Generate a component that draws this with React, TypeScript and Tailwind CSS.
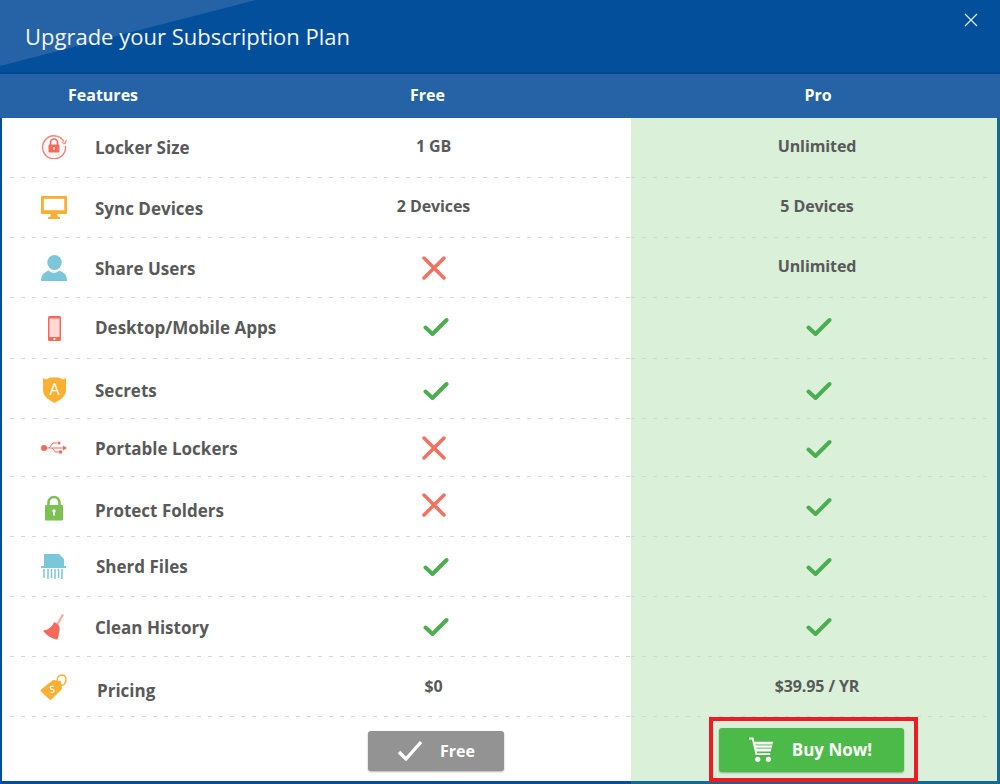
import React from "react";

const C = "#f8695a", O = "#fbb034", T = "#7cc6d9";

const LockerIcon = () => (
  <svg width="26" height="26" viewBox="0 0 26 26" fill="none">
    <path d="M23 8.500A11.500 11.500 0 1 0 24.500 13" stroke={C} strokeWidth="1.400" opacity=".85" />
    <path d="M20.500 9.500l3.500 1 1.500-3.500" stroke={C} strokeWidth="1.200" opacity=".8" />
    <circle cx="13" cy="13" r="9.500" stroke={C} strokeWidth=".8" strokeDasharray="1.500 1.500" opacity=".35" />
    <path d="M9.500 12V9.500a3.500 3.500 0 0 1 7 0V12" stroke={C} strokeWidth="1.700" />
    <rect x="7.500" y="11.500" width="11" height="8" rx="1" fill={C} />
    <rect x="12.300" y="14" width="1.400" height="3" fill="#fff" />
  </svg>
);
const MonitorIcon = () => (
  <svg width="26" height="23" viewBox="0 0 26 23">
    <path d="M1 0h24a1 1 0 0 1 1 1v16a1 1 0 0 1-1 1h-9l1 3h2v2H7v-2h2l1-3H1a1 1 0 0 1-1-1V1a1 1 0 0 1 1-1z" fill={O} />
    <rect x="2.800" y="2.800" width="20.400" height="11.400" fill="#fff" />
  </svg>
);
const UserIcon = () => (
  <svg width="26" height="26" viewBox="0 0 26 26">
    <ellipse cx="13.500" cy="7.500" rx="7.200" ry="7.500" fill={T} />
    <path d="M0 26c0-6 3-9 8-10.500 3 2.500 7 2.500 10 0C23 17 26 20 26 26z" fill={T} />
    <path d="M8 15.500c3 2.500 7 2.500 10 0" stroke="#fff" strokeWidth=".8" fill="none" />
  </svg>
);
const PhoneIcon = () => (
  <svg width="13" height="25" viewBox="0 0 13 25">
    <rect x="0" y="0" width="13" height="25" rx="1.500" fill={C} />
    <rect x="1.500" y="2.500" width="10" height="18.500" fill="#ffd9d4" />
    <circle cx="6.500" cy="23" r="1" fill="#fff" />
  </svg>
);
const ShieldIcon = () => (
  <svg width="23" height="26" viewBox="0 0 23 26">
    <path d="M0 1l3 1.500L7 0.500h9l4 2L23 1v12c0 6-5.500 10-11.500 13C5.500 23 0 19 0 13z" fill={O} />
    <text x="11.500" y="18" textAnchor="middle" fontSize="16" fill="#fff" fontFamily="'Open Sans', sans-serif">A</text>
  </svg>
);
const UsbIcon = () => (
  <svg width="26" height="14" viewBox="0 0 26 14" fill="none">
    <circle cx="3" cy="7" r="3" fill={C} />
    <path d="M3 7h22M8 7l4-5h4M11 7l3.500 4H18" stroke={C} strokeWidth="1" />
    <path d="M22 4.500L26 7l-4 2.500z" fill={C} />
    <circle cx="18" cy="2" r="1.500" fill={C} />
    <rect x="18" y="9.500" width="3" height="3" fill={C} />
  </svg>
);
const GreenLock = () => (
  <svg width="18" height="26" viewBox="0 0 18 26" fill="none">
    <path d="M3.500 11V7.500a5.500 5.500 0 0 1 11 0V11" stroke="#7cc152" strokeWidth="2.600" />
    <rect x="0" y="10" width="18" height="15.500" rx="1" fill="#7cc152" />
    <rect x="8" y="15.500" width="2" height="5" fill="#fff" />
    <circle cx="9" cy="16" r="1.700" fill="#fff" />
  </svg>
);
const ShredIcon = () => (
  <svg width="26" height="26" viewBox="0 0 26 26" fill="none">
    <path d="M3 0h15l5 5v8H3z" fill={T} />
    <rect x="0" y="12" width="25" height="2" fill={T} />
    <path d="M3 15v9M7 15v10M10.500 15v9M14 15v10M17.500 15v9M21 15v10" stroke={T} strokeWidth="1.500" />
  </svg>
);
const BroomIcon = () => (
  <svg width="24" height="27" viewBox="0 0 24 27" fill="none">
    <path d="M15 12L21 1.500" stroke={C} strokeWidth="2.400" opacity=".55" />
    <path d="M12 9c3 1 5 3 5.500 5 .5 3 -.5 7-2 12.500C11 26 5 23 1 17.500c4 0 9-3 11-8.500z" fill={C} />
  </svg>
);
const TagIcon = () => (
  <svg width="28" height="26" viewBox="0 0 28 26" fill="none">
    <path d="M13 6l8 1 1 8-10.500 10.500a1.500 1.500 0 0 1-2 0L1 17.500a1.500 1.500 0 0 1 0-2z" fill={O} />
    <path d="M18 9c-2-4 0-8 4-8s5 5 3 8c-1 2-3 2.500-4 2" stroke={O} strokeWidth="1.400" />
    <path d="M13.500 12.500c-2-1-4 .5-3 2 .8 1.300 3 .5 3.500 2 .4 1.500-2 2.800-3.500 1.500" stroke="#fff" strokeWidth="1.200" />
  </svg>
);

const Check = () => (
  <svg className="ml-[4px]" width="26" height="20" viewBox="0 0 26 20" fill="none">
    <path d="M2.500 10.500l7 6.500L23.500 3" stroke="#4cae50" strokeWidth="4" strokeLinecap="round" strokeLinejoin="round" />
  </svg>
);
const Cross = () => (
  <svg width="24" height="24" viewBox="0 0 24 24" fill="none">
    <path d="M2 2l20 20M22 2L2 22" stroke="#f4705f" strokeWidth="3.500" strokeLinecap="round" />
  </svg>
);
const Cart = () => (
  <svg width="24" height="26" viewBox="0 0 26 28" fill="none">
    <path d="M0 1.500h4l4 17h15" stroke="#fff" strokeWidth="2" />
    <path d="M5.500 5H26l-2.500 10.500H8z" fill="#fff" />
    <path d="M7 8.500h18M8 12h16" stroke="#4cba48" strokeWidth="1" />
    <circle cx="9.500" cy="24" r="2.800" fill="#fff" />
    <circle cx="21" cy="24" r="2.800" fill="#fff" />
  </svg>
);

const Dash = ({ className }: { className: string }) => (
  <div className={"h-px shrink-0 bg-[repeating-linear-gradient(90deg,#d6d6d6_0_4px,transparent_4px_11px)] " + className} />
);

const Val = ({ children }: { children: React.ReactNode }) => (
  <span className="mb-[4px] text-[16px] tracking-[-0.1px] font-bold text-[#595959] whitespace-nowrap">{children}</span>
);

type Row = {
  h: string;
  icon: React.ReactNode;
  iconCls: string;
  label: string;
  labelCls: string;
  freeCls: string;
  proCls: string;
  free: React.ReactNode;
  pro: React.ReactNode;
};

const rows: Row[] = [
  { h: "h-[60px]", icon: <LockerIcon />, iconCls: "mb-[3px]", label: "Locker Size", labelCls: "", freeCls: "", proCls: "", free: <Val>1 GB</Val>, pro: <Val>Unlimited</Val> },
  { h: "h-[60px]", icon: <MonitorIcon />, iconCls: "", label: "Sync Devices", labelCls: "mt-[2px]", freeCls: "", proCls: "", free: <Val>2 Devices</Val>, pro: <Val>5 Devices</Val> },
  { h: "h-[60px]", icon: <UserIcon />, iconCls: "", label: "Share Users", labelCls: "mt-[2px]", freeCls: "", proCls: "", free: <Cross />, pro: <Val>Unlimited</Val> },
  { h: "h-[61px]", icon: <PhoneIcon />, iconCls: "", label: "Desktop/Mobile Apps", labelCls: "", freeCls: "mb-[2px]", proCls: "mb-[2px]", free: <Check />, pro: <Check /> },
  { h: "h-[60px]", icon: <ShieldIcon />, iconCls: "mt-[3px]", label: "Secrets", labelCls: "pt-[5px]", freeCls: "mt-[5px]", proCls: "mt-[5px]", free: <Check />, pro: <Check /> },
  { h: "h-[58px]", icon: <UsbIcon />, iconCls: "", label: "Portable Lockers", labelCls: "mt-[2px]", freeCls: "", proCls: "mt-[3px]", free: <Cross />, pro: <Check /> },
  { h: "h-[60px]", icon: <GreenLock />, iconCls: "mt-[2px]", label: "Protect Folders", labelCls: "pt-[9px]", freeCls: "mb-[3px]", proCls: "", free: <Cross />, pro: <Check /> },
  { h: "h-[60px]", icon: <ShredIcon />, iconCls: "mt-[1px]", label: "Sherd Files", labelCls: "ml-[1px]", freeCls: "", proCls: "", free: <Check />, pro: <Check /> },
  { h: "h-[60px]", icon: <BroomIcon />, iconCls: "", label: "Clean History", labelCls: "mt-[2px]", freeCls: "", proCls: "", free: <Check />, pro: <Check /> },
  { h: "h-[60px]", icon: <TagIcon />, iconCls: "", label: "Pricing", labelCls: "pt-[9px] pl-[2px]", freeCls: "mt-[2px]", proCls: "mt-[2px]", free: <Val>$0</Val>, pro: <Val>$39.95 / YR</Val> },
];

export default function App() {
  return (
    <div className="w-[1000px] h-[784px] flex flex-col bg-[#034f9c] font-['Open_Sans',sans-serif] overflow-hidden">
      {/* title bar */}
      <div className="relative h-[72px] shrink-0 flex items-center justify-between pl-[25px] pr-[21px]">
        <div className="absolute inset-0 bg-[#2563a6] [clip-path:polygon(0_0,256px_0,0_66px)]" />
        <span className="relative text-[22px] font-medium text-[#f0f5fa] whitespace-nowrap">Upgrade your Subscription Plan</span>
        <svg className="relative -mt-[32px]" width="16" height="16" viewBox="0 0 16 16" fill="none">
          <path d="M2 2l12 12M14 2L2 14" stroke="#dfe8f2" strokeWidth="1.300" />
        </svg>
      </div>
      <div className="h-[2px] shrink-0 bg-[#03488f]" />
      {/* column heads */}
      <div className="h-[44px] shrink-0 flex items-center bg-[#2563a6] text-white text-[16px] font-bold pb-[2px]">
        <div className="w-[236px] pl-[68px]">Features</div>
        <div className="w-[395px] text-center -ml-[6px]">Free</div>
        <div className="flex-1 text-center pl-[11px]">Pro</div>
      </div>
      {/* table */}
      <div className="relative flex-1 flex flex-col ml-[2px] bg-white border-r-[3px] border-[#156a93]">
        {rows.map((r) => (
          <div key={r.label} className={"flex shrink-0 " + r.h}>
            <div className="w-[629px] flex flex-col">
              <div className="flex-1 flex items-center">
                <div className="w-[234px] shrink-0 flex items-center pl-[30px]">
                  <div className={"w-[44px] shrink-0 mr-[19px] flex items-center justify-center " + r.iconCls}>{r.icon}</div>
                  <div className={"text-[17px] font-bold text-[#595959] whitespace-nowrap " + r.labelCls}>{r.label}</div>
                </div>
                <div className={"flex-1 flex items-center justify-center " + r.freeCls}>{r.free}</div>
              </div>
              <Dash className="ml-2" />
            </div>
            <div className="flex-1 flex flex-col bg-[#daf0d9]">
              <div className={"flex-1 flex items-center justify-center pl-[6px] " + r.proCls}>{r.pro}</div>
              <Dash className="mr-[5px]" />
            </div>
          </div>
        ))}
        <div className="flex-1 flex">
          <div className="w-[629px] flex justify-end items-end pb-[10px] pr-[127px] border-b-[3px] border-[#034f9c]">
            <div className="w-[136px] h-[40px] rounded-[3px] bg-[#939393] shadow-[0_1px_2px_rgba(0,0,0,0.3)] flex items-center justify-center gap-[17px] text-white font-bold text-[16px]">
              <svg width="26" height="22" viewBox="0 0 26 22" fill="none">
                <path d="M2 12l7 7L24 2" stroke="#fff" strokeWidth="3.400" strokeLinejoin="round" />
              </svg>
              <span>Free</span>
            </div>
          </div>
          <div className="flex-1 flex items-end pb-[9px] pl-[88px] bg-[#daf0d9] border-b-[3px] border-[#156a93]">
            <div className="w-[185px] h-[44px] pr-[2px] rounded-[3px] bg-[#4cba48] shadow-[0_1px_2px_rgba(0,0,0,0.3)] flex items-center justify-center gap-[19px] text-white font-bold text-[17px]">
              <Cart />
              <span>Buy Now!</span>
            </div>
          </div>
        </div>
        {/* red annotation */}
        <div className="absolute left-[707px] top-[599px] w-[209px] h-[65px] border-4 border-[#ed1c24]" />
      </div>
    </div>
  );
}
